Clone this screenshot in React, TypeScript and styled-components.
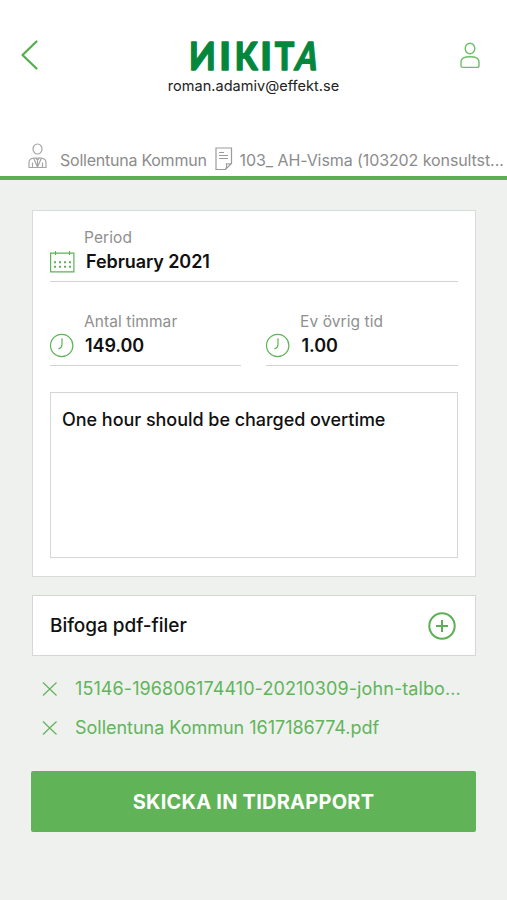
import React from "react";
import styled, { createGlobalStyle } from "styled-components";

const GlobalStyle = createGlobalStyle`
  *, *::before, *::after { box-sizing: border-box; }
  html, body { margin: 0; background: #eef1ee; }
  body { font-family: Inter, "Liberation Sans", sans-serif; color: #111; }
  button { font-family: inherit; border: 0; padding: 0; background: none; cursor: pointer; }
  svg { display: block; flex: none; overflow: visible; }
`;

const Screen = styled.div`
  width: 507px;
  height: 900px;
  background: #eef1ee;
  overflow: hidden;
`;

const Header = styled.header`
  height: 180px;
  padding-top: 38px;
  display: flex;
  flex-direction: column;
  justify-content: space-between;
  background: #fff;
  border-bottom: 4px solid #5cb053;
`;

const TopBar = styled.div`
  display: grid;
  grid-template-columns: 60px 1fr 60px;
  align-items: start;
`;

const IconButton = styled.button<{ $left?: number; $top?: number }>`
  margin: ${(p) => p.$top ?? 0}px 0 0 ${(p) => p.$left ?? 0}px;
  justify-self: start;
`;

const Brand = styled.div`
  display: flex;
  flex-direction: column;
  align-items: center;
`;

const Email = styled.div`
  margin-top: 2px;
  font-size: 14.5px;
  line-height: 20px;
  letter-spacing: 0.04px;
  color: #222;
`;

const ContextBar = styled.div`
  height: 42px;
  padding-left: 28px;
  display: flex;
  align-items: center;
  color: #8c8c8c;
`;

const ContextText = styled.span<{ $spacing: number }>`
  margin: 10px 8px 0 12px;
  font-size: 16px;
  line-height: 22px;
  letter-spacing: ${(p) => p.$spacing}px;
  white-space: nowrap;

  svg + & + svg { margin-top: 8px; }
  svg ~ svg + & { margin: 10px 0 0 7px; }
`;

const Main = styled.main`
  padding: 30px 31px 0 32px;
`;

const Card = styled.section`
  height: 367px;
  padding: 16px 17px 17px;
  display: flex;
  flex-direction: column;
  background: #fff;
  border: 1px solid #d9dbda;
`;

const FieldRow = styled.div`
  display: grid;
  grid-template-columns: 191px 192px;
  justify-content: space-between;
  margin-top: 29px;
`;

const Field = styled.div`
  height: 55px;
  padding-bottom: 7px;
  display: grid;
  grid-template-columns: 34px 1fr;
  grid-template-rows: 22px 1fr;
  align-items: center;
  border-bottom: 1px solid #d3d3d3;
`;

const Label = styled.span`
  grid-column: 2;
  font-size: 15.5px;
  line-height: 22px;
  letter-spacing: 0.08px;
  color: #8f8f8f;
`;

const Value = styled.span<{ $indent: number }>`
  padding-left: ${(p) => p.$indent}px;
  font-size: 18px;
  line-height: 24px;
  font-weight: 600;
  letter-spacing: -0.08px;
`;

const Comment = styled.div`
  height: 166px;
  margin-top: 26px;
  padding: 14px 11px;
  border: 1px solid #d6d6d6;
  font-size: 18px;
  line-height: 26px;
  font-weight: 500;
  letter-spacing: -0.04px;
`;

const AttachBar = styled.section`
  height: 61px;
  margin-top: 18px;
  padding: 0 19px 0 17px;
  display: flex;
  align-items: center;
  justify-content: space-between;
  background: #fff;
  border: 1px solid #d5d7d6;
`;

const AttachTitle = styled.h2`
  margin: 1px 0 0;
  font-size: 19px;
  line-height: 26px;
  font-weight: 500;
  letter-spacing: -0.04px;
`;

const FileList = styled.ul`
  margin: 13px 0 0;
  padding: 0 0 0 11px;
  list-style: none;
`;

const FileItem = styled.li`
  height: 39px;
  display: flex;
  align-items: center;
  gap: 18px;
`;

const FileName = styled.span<{ $spacing: number }>`
  font-size: 18px;
  line-height: 26px;
  letter-spacing: ${(p) => p.$spacing}px;
  color: #62b45b;
  white-space: nowrap;
`;

const Submit = styled.button`
  width: 445px;
  height: 61px;
  padding-top: 1px;
  margin: 24px 0 0 -1px;
  display: block;
  border-radius: 2px;
  background: #60b356;
  color: #fff;
  font-size: 20px;
  line-height: 60px;
  font-weight: 700;
  letter-spacing: 0.24px;
  text-align: center;
`;

const GREEN = "#5db456";

const BackIcon = () => (
  <svg width="18" height="30" fill="none" stroke="#51ae4b" strokeWidth="2.2" strokeLinecap="round" strokeLinejoin="round">
    <path d="M15.5 1.5 1.5 15l14 13.5" />
  </svg>
);

const ProfileIcon = () => (
  <svg width="20" height="26" fill="none" stroke="#6fbd68" strokeWidth="1.4">
    <ellipse cx="10" cy="5.5" rx="4.8" ry="5.2" />
    <path d="M1 22.2v-3.4c0-3.6 4-5 9-5s9 1.4 9 5v3.4q0 2.2-2 2.2H3q-2 0-2-2.2Z" />
  </svg>
);

/* Each wordmark letter has its own place, width and slant on the baseline. */
const wordmark = [
  { letter: "N", transform: "translate(26.8 31.5) scale(-0.9 1)" },
  { letter: "I", transform: "translate(30.2 31.5)" },
  { letter: "K", transform: "translate(45.8 31.5) scale(0.85 1)" },
  { letter: "I", transform: "translate(71.2 31.5)" },
  { letter: "T", transform: "translate(85.8 31.5) scale(0.84 1)" },
  { letter: "A", transform: "translate(105 31.5) skewX(-12) scale(0.79 1)" },
];

const Logo = () => (
  <svg width="130" height="36" role="img" aria-label="NIKITA">
    <g
      fill="#04873c"
      stroke="#04873c"
      strokeWidth="1.4"
      strokeLinejoin="round"
      fontFamily="Lato, sans-serif"
      fontWeight="900"
      fontSize="38.5"
    >
      {wordmark.map((part, i) => (
        <text key={i} transform={part.transform}>
          {part.letter}
        </text>
      ))}
    </g>
  </svg>
);

const ConsultantIcon = () => (
  <svg width="20" height="26" fill="none" stroke="#a5a5a5" strokeWidth="1.2">
    <ellipse cx="9.5" cy="7" rx="4.5" ry="5" />
    <path d="M1 25.5v-4.7c0-3 2-4.5 5-4.8h7c3 .3 5 1.8 5 4.8v4.7ZM4.500 25.500v-5M14.500 25.500v-5M5.500 16l4 9 4-9M7.500 16l2 2 2-2M9.500 18v7" />
  </svg>
);

const DocumentIcon = () => (
  <svg width="18" height="22" fill="none" stroke="#9b9b9b" strokeWidth="1.2">
    <path d="M1 0h15.500v15.500L10.500 21.500H1ZM16.500 15.500q-3 .8-5 .3.600 3-1 5.700M4 4.500h5M4 7.500h9M4 10.500h9" />
  </svg>
);

const CalendarIcon = () => (
  <svg width="25" height="22" fill="none" stroke={GREEN} strokeWidth="1.2">
    <path d="M.6 2.1h23.300v18.800H.6ZM5.500 0v4M19.500 0v4" />
    <path d="M4 11.200h17M4 15.700h17" strokeWidth="2" strokeDasharray="2 3" />
  </svg>
);

const ClockIcon = () => (
  <svg width="24" height="24" fill="none" stroke={GREEN} strokeWidth="1.2">
    <circle cx="11.700" cy="11.500" r="11.200" />
    <path d="M12 4.200v6.500q-.3 3-3.700 4.300" />
  </svg>
);

const AddIcon = () => (
  <svg width="28" height="28" fill="none" stroke="#59b151" strokeWidth="2">
    <circle cx="14" cy="14" r="12.700" />
    <path d="M14 8v12M8 14h12" />
  </svg>
);

const RemoveIcon = () => (
  <svg width="14" height="14" fill="none" stroke="#62b35c" strokeWidth="1.2">
    <path d="m0 .5 13.500 13M13.500.5 0 13.500" />
  </svg>
);

const files = [
  { name: "15146-196806174410-20210309-john-talbo...", spacing: 0.09 },
  { name: "Sollentuna Kommun 1617186774.pdf", spacing: -0.02 },
];

export default function App() {
  return (
    <Screen>
      <GlobalStyle />
      <Header>
        <TopBar>
          <IconButton $left={21} $top={2} aria-label="Tillbaka">
            <BackIcon />
          </IconButton>
          <Brand>
            <Logo />
            <Email>roman.adamiv@effekt.se</Email>
          </Brand>
          <IconButton $left={13} $top={5} aria-label="Profil">
            <ProfileIcon />
          </IconButton>
        </TopBar>
        <ContextBar>
          <ConsultantIcon />
          <ContextText $spacing={-0.24}>Sollentuna Kommun</ContextText>
          <DocumentIcon />
          <ContextText $spacing={-0.09}>103_ AH-Visma (103202 konsultst...</ContextText>
        </ContextBar>
      </Header>
      <Main>
        <Card>
          <Field>
            <Label>Period</Label>
            <CalendarIcon />
            <Value $indent={2}>February 2021</Value>
          </Field>
          <FieldRow>
            <Field>
              <Label>Antal timmar</Label>
              <ClockIcon />
              <Value $indent={1}>149.00</Value>
            </Field>
            <Field>
              <Label>Ev övrig tid</Label>
              <ClockIcon />
              <Value $indent={1.5}>1.00</Value>
            </Field>
          </FieldRow>
          <Comment>One hour should be charged overtime</Comment>
        </Card>
        <AttachBar>
          <AttachTitle>Bifoga pdf-filer</AttachTitle>
          <IconButton aria-label="Lägg till">
            <AddIcon />
          </IconButton>
        </AttachBar>
        <FileList>
          {files.map((file) => (
            <FileItem key={file.name}>
              <RemoveIcon />
              <FileName $spacing={file.spacing}>{file.name}</FileName>
            </FileItem>
          ))}
        </FileList>
        <Submit>SKICKA IN TIDRAPPORT</Submit>
      </Main>
    </Screen>
  );
}
